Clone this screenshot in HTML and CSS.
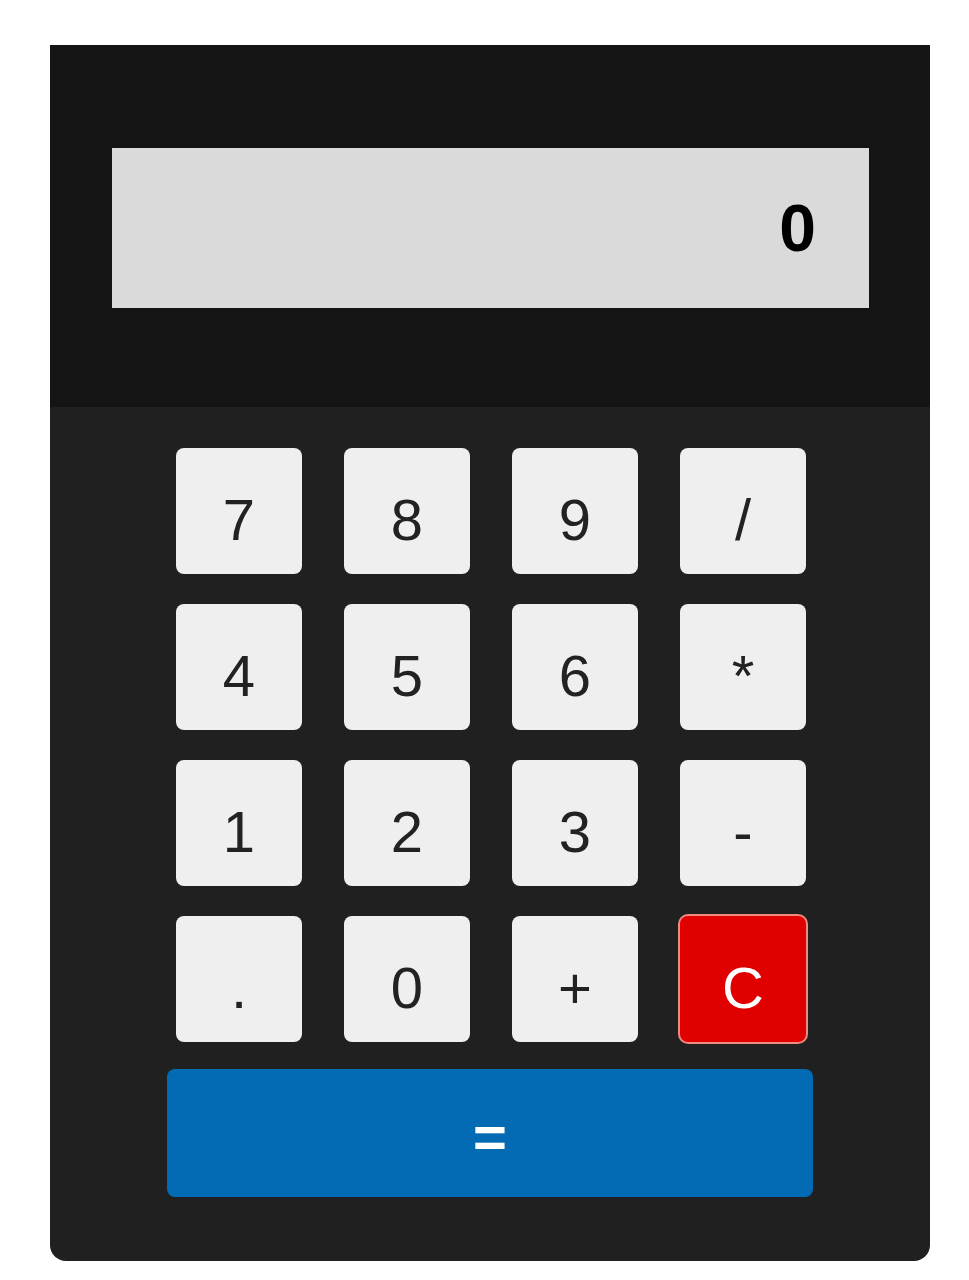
FILE: index.html
```html
<!DOCTYPE html>
<html lang="en">
<head>
<meta charset="utf-8">
<title>Calculator</title>
<link rel="stylesheet" href="styles.css">
</head>
<body>
<div class="calculator">
  <div class="screen">
    <div class="display">0</div>
  </div>
  <div class="keypad">
    <div class="keys">
      <button class="key">7</button>
      <button class="key">8</button>
      <button class="key">9</button>
      <button class="key">/</button>
      <button class="key">4</button>
      <button class="key">5</button>
      <button class="key">6</button>
      <button class="key">*</button>
      <button class="key">1</button>
      <button class="key">2</button>
      <button class="key">3</button>
      <button class="key">-</button>
      <button class="key">.</button>
      <button class="key">0</button>
      <button class="key">+</button>
      <button class="key key-clear">C</button>
    </div>
    <button class="equals">=</button>
  </div>
</div>
</body>
</html>
```
FILE: styles.css
```css
* { box-sizing: border-box; }
html, body { margin: 0; padding: 0; background: #ffffff; }
body { font-family: "Liberation Sans", Arial, sans-serif; }

.calculator {
  width: 880px;
  margin: 45px 0 0 50px;
  border-radius: 0 0 16px 16px;
  overflow: hidden;
  background: #202020;
}

.screen {
  background: #141414;
  padding: 103px 61px 99px 62px;
}

.display {
  height: 160px;
  background: #dadada;
  display: flex;
  align-items: center;
  justify-content: flex-end;
  padding: 0 53px 0 0;
  font-size: 66px;
  font-weight: bold;
  line-height: 1;
  color: #000;
}

.keypad {
  padding: 41px 0 64px;
  display: flex;
  flex-direction: column;
  align-items: center;
}

.keys {
  display: grid;
  grid-template-columns: repeat(4, 126px);
  grid-auto-rows: 126px;
  column-gap: 42px;
  row-gap: 30px;
  margin-left: 2px;
}

.key {
  border: none;
  border-radius: 8px;
  background: #efefef;
  color: #222;
  font-family: "Liberation Sans", Arial, sans-serif;
  font-size: 58px;
  line-height: 1;
  display: flex;
  align-items: center;
  justify-content: center;
  padding: 18px 0 0;
  margin: 0;
}

.key-clear {
  background: #e10000;
  color: #fff;
  box-shadow: 0 0 0 2px #ee8a80;
}

.equals {
  margin-top: 27px;
  width: 646px;
  height: 128px;
  border: none;
  border-radius: 8px;
  background: #036bb3;
  color: #fff;
  font-family: "Liberation Sans", Arial, sans-serif;
  font-size: 58px;
  font-weight: bold;
  line-height: 1;
  padding: 8px 0 0;
  display: flex;
  align-items: center;
  justify-content: center;
}
```
